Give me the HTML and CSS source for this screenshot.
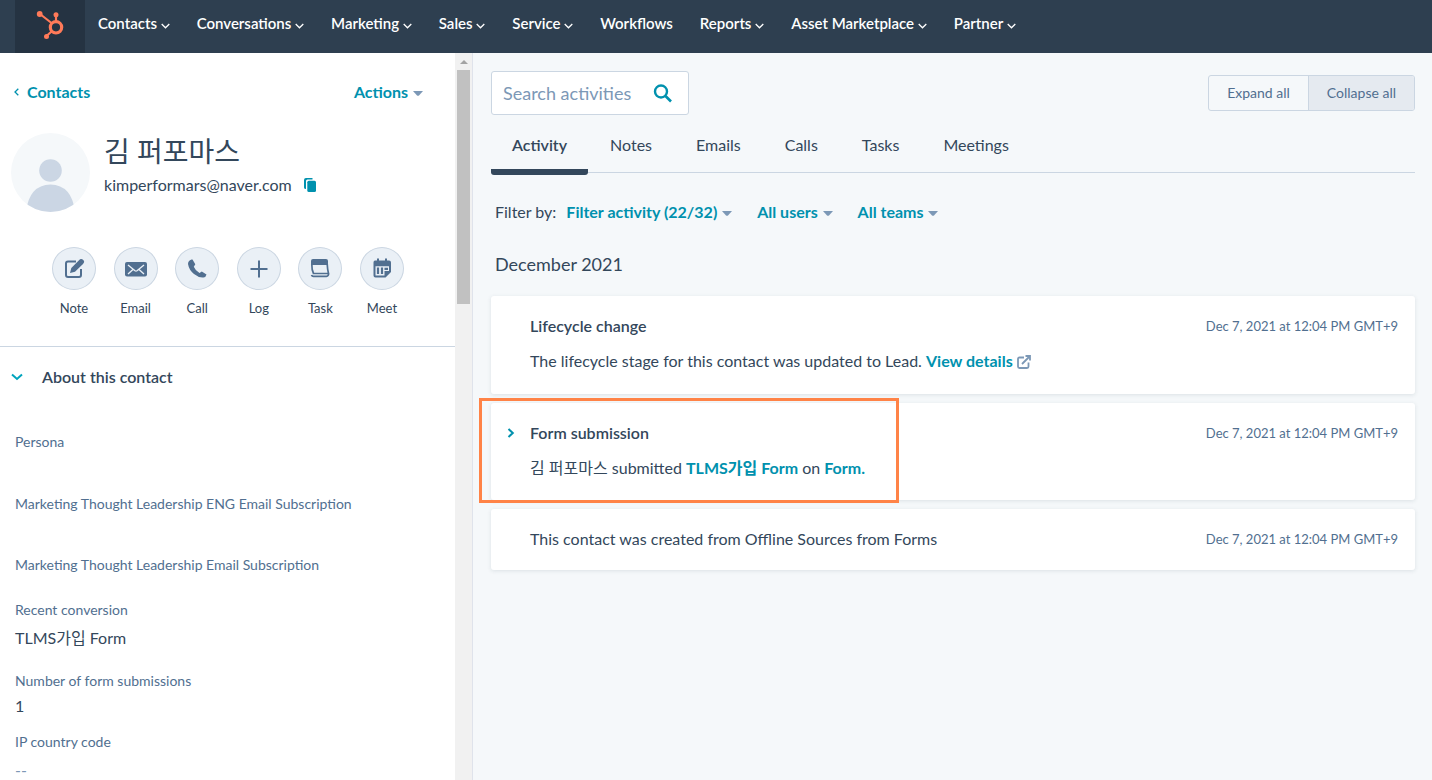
FILE: index.html
```html
<!DOCTYPE html>
<html lang="en">
<head>
<meta charset="utf-8">
<title>Contact record</title>
<link rel="stylesheet" href="styles.css">
</head>
<body>
<svg class="defs" aria-hidden="true">
  <symbol id="chev" viewBox="0 0 9 6"><path d="M.7 1 4.500 4.800 8.300 1" fill="none" stroke="currentColor" stroke-width="1.300"/></symbol>
  <symbol id="caret" viewBox="0 0 10 5"><path d="M0 0H10L6 4.4Q5 5.2 4 4.4Z" fill="currentColor"/></symbol>
</svg>
<header class="topbar">
  <a class="logo" href="#" aria-label="Home">
    <svg width="28" height="30" viewBox="0 0 28 30" fill="none" stroke="#ff7a59">
      <circle cx="20" cy="17.300" r="5.700" stroke-width="3.200"/>
      <path d="M4 4 15.500 13M20 4.500V11M10.500 26 15.500 21.500" stroke-width="2.200"/>
      <g fill="#ff7a59" stroke="none"><circle cx="3.700" cy="4" r="2.900"/><circle cx="20" cy="4.800" r="2.500"/><circle cx="10.500" cy="26.500" r="2.500"/></g>
    </svg>
  </a>
  <nav class="nav">
    <button>Contacts <svg><use href="#chev"/></svg></button>
    <button>Conversations <svg><use href="#chev"/></svg></button>
    <button>Marketing <svg><use href="#chev"/></svg></button>
    <button>Sales <svg><use href="#chev"/></svg></button>
    <button>Service <svg><use href="#chev"/></svg></button>
    <a href="#">Workflows</a>
    <button>Reports <svg><use href="#chev"/></svg></button>
    <button>Asset Marketplace <svg><use href="#chev"/></svg></button>
    <button>Partner <svg><use href="#chev"/></svg></button>
  </nav>
</header>
<div class="page">
  <aside class="sidebar">
    <div class="side-content">
      <div class="side-head">
        <a class="back" href="#"><svg width="5" height="8" viewBox="0 0 5 8"><path d="M4.300.7 1 4 4.300 7.300" fill="none" stroke="currentColor" stroke-width="1.300"/></svg>Contacts</a>
        <button class="drop">Actions <svg><use href="#caret"/></svg></button>
      </div>
      <section class="profile">
        <svg class="avatar" viewBox="0 0 79 79" aria-hidden="true">
          <defs><clipPath id="round"><circle cx="39.500" cy="39.500" r="39.500"/></clipPath></defs>
          <g clip-path="url(#round)"><rect width="79" height="79" fill="#f5f8fa"/><g fill="#cbd6e4"><circle cx="39.500" cy="37.500" r="11.300"/><path d="M15 79Q18 52 39.500 51.500 61 52 64 79Z"/></g></g>
        </svg>
        <div class="who">
          <h1>김 퍼포마스</h1>
          <p class="mail">kimperformars@naver.com
            <button class="copy" aria-label="Copy email"><svg width="12" height="14" viewBox="0 0 12 14"><path d="M2 0H8.500V1.500H3.500Q2 1.500 2 3V11Q0 11 0 9.500V2Q0 0 2 0Z" fill="#0091ae"/><rect x="3.300" y="2.700" width="8.700" height="11.300" rx="1.500" fill="#0091ae"/></svg></button>
          </p>
        </div>
      </section>
      <div class="actions">
        <button><span class="disc"><svg viewBox="0 0 22 22"><path d="M13 3.500H5Q3 3.500 3 5.500V17Q3 19 5 19H16Q18 19 18 17V11" fill="none" stroke="#516f90" stroke-width="2"/><path d="M7 15 8.300 10 16 2.300Q18-.2 20.500 2.300 22 4 20 6L12 13.700Z" fill="#516f90"/></svg></span>Note</button>
        <button><span class="disc"><svg viewBox="0 0 22 22"><rect y="4" width="22" height="14.500" rx="2" fill="#516f90"/><path d="M3 7 10 12.800Q11 13.500 12 12.800L19 7M3 16 8 11.500M19 16 14 11.500" fill="none" stroke="#eaf0f6" stroke-width="1.400"/></svg></span>Email</button>
        <button><span class="disc"><svg viewBox="0 0 22 22"><path d="M5.500 1.500Q2 2.500 2 6 3 12 8 16 13 20 17.500 19.500 20 19 20.500 16.500L15.800 13.500 13.500 15Q9.500 13 7.800 8.800L9.300 6.200 6.500 1.500Z" fill="#516f90"/></svg></span>Call</button>
        <button><span class="disc"><svg viewBox="0 0 22 22"><path d="M11 2.500V19.500M2.500 11H19.500" stroke="#516f90" stroke-width="2"/></svg></span>Log</button>
        <button><span class="disc"><svg viewBox="0 0 22 22"><path d="M4 1H17Q19 1 19 3V7H2V3Q2 1 4 1Z" fill="#516f90"/><path d="M2.800 6Q2.700 12 4.500 15.500H19.500Q18.500 12 18.200 6M2.500 17Q3 18.300 4.500 18.300H17.500Q19.600 18.300 19.500 15.500" fill="none" stroke="#516f90" stroke-width="1.700"/></svg></span>Task</button>
        <button><span class="disc"><svg viewBox="0 0 22 22"><path d="M4 2.500H6V.5H8V2.500H14V.5H16V2.500H18Q20 2.500 20 4.500V14L14.500 19.500H4.500Q2.500 19.500 2.500 17.500V4.500Q2.500 2.500 4 2.500Z" fill="#516f90"/><path d="M4.500 8.300H18V13H13.500V17.500H4.500Z" fill="#eaf0f6"/><path d="M7 9.500V16M11 9.500V16M13.500 10.800H17" stroke="#516f90" stroke-width="2.200"/></svg></span>Meet</button>
      </div>
      <section class="about">
        <h2><svg width="12" height="8" viewBox="0 0 12 8"><path d="M1 1.500 6 6 11 1.500" fill="none" stroke="#00a4bd" stroke-width="2"/></svg>About this contact</h2>
        <dl>
          <div class="blank"><dt>Persona</dt></div>
          <div><dt>Marketing Thought Leadership ENG Email Subscription</dt></div>
          <div class="short"><dt>Marketing Thought Leadership Email Subscription</dt></div>
          <div class="wide"><dt>Recent conversion</dt><dd>TLMS<span class="ko">가입</span> Form</dd></div>
          <div><dt>Number of form submissions</dt><dd>1</dd></div>
          <div class="unset"><dt>IP country code</dt><dd>--</dd></div>
        </dl>
      </section>
    </div>
    <div class="track" aria-hidden="true"><i class="arrow"></i><i class="thumb"></i></div>
  </aside>
  <main>
    <div class="tools">
      <label class="search"><input type="text" aria-label="Search activities" placeholder="Search activities">
        <svg width="20" height="20" viewBox="0 0 20 20" fill="none" stroke="#0091ae"><circle cx="8" cy="8.500" r="6" stroke-width="2.400"/><path d="M12.500 13 18 18.500" stroke-width="2.600"/></svg></label>
      <div class="toggle"><button>Expand all</button><button class="on">Collapse all</button></div>
    </div>
    <nav class="tabs"><a class="current" href="#">Activity</a><a href="#">Notes</a><a href="#">Emails</a><a href="#">Calls</a><a href="#">Tasks</a><a href="#">Meetings</a></nav>
    <div class="filters"><span>Filter by:</span>
      <button class="drop">Filter activity (22/32) <svg><use href="#caret"/></svg></button>
      <button class="drop">All users <svg><use href="#caret"/></svg></button>
      <button class="drop">All teams <svg><use href="#caret"/></svg></button>
    </div>
    <h2 class="month">December 2021</h2>
    <div class="feed">
      <article class="card">
        <div class="row"><h3>Lifecycle change</h3><time>Dec 7, 2021 at 12:04 PM GMT+9</time></div>
        <p>The lifecycle stage for this contact was updated to Lead. <a href="#">View details <svg class="ext" viewBox="0 0 14 14"><path d="M7 2.500H2.500Q1 2.500 1 4V11.500Q1 13 2.500 13H10Q11.500 13 11.500 11.500V7.500M5 9 12 2M8.500 1H13V5.500" fill="none" stroke="#7c98b6" stroke-width="1.800"/></svg></a></p>
      </article>
      <article class="card marked">
        <div class="row"><button class="open" aria-label="Expand"><svg width="8" height="10" viewBox="0 0 8 10"><path d="M1.500 1 5.800 5 1.500 9" fill="none" stroke="#0091ae" stroke-width="2"/></svg></button><h3>Form submission</h3><time>Dec 7, 2021 at 12:04 PM GMT+9</time></div>
        <p><span class="ko">김 퍼포마스</span> submitted <a href="#">TLMS<span class="ko">가입</span> Form</a> on <a href="#">Form.</a></p>
      </article>
      <article class="card compact">
        <div class="row"><p>This contact was created from Offline Sources from Forms</p><time>Dec 7, 2021 at 12:04 PM GMT+9</time></div>
      </article>
    </div>
  </main>
</div>
</body>
</html>
```

FILE: styles.css
```css
*, *::after { box-sizing: border-box; margin: 0; padding: 0; }
body {
  display: flex; flex-direction: column; height: 100vh; overflow: hidden;
  font: 16px/20px Lato, "Noto Sans CJK KR", sans-serif; color: #33475b; background: #f5f8fa;
}
button { font: inherit; color: inherit; background: none; border: 0; cursor: pointer; }
a { color: #0091ae; font-weight: 700; text-decoration: none; }
.defs { position: absolute; width: 0; height: 0; }

.topbar { display: flex; flex: none; height: 53px; padding-left: 15px; background: #2e3f50; }
.logo { display: flex; width: 70px; padding: 10px 0 0 21px; background: #253342; }
.nav { display: flex; gap: 27px; padding: 13px 0 0 13px; align-items: flex-start; color: #fff; white-space: nowrap; }
.nav button, .nav a { font-size: 15px; font-weight: 600; color: #fff; }
.nav svg { width: 9px; height: 6px; }

.page { display: flex; flex: 1; min-height: 0; }
.sidebar { display: flex; flex: none; width: 473px; background: #fff; border-right: 1px solid #dfe3eb; }
.side-content { flex: 1; overflow: hidden; }
.track { display: flex; flex-direction: column; align-items: center; width: 17px; background: #f1f1f1; }
.arrow { border: 4px solid transparent; border-top: 0; border-bottom-color: #a3a3a3; margin: 7px 0 6px; }
.thumb { width: 13px; height: 234px; background: #c1c1c1; }

.side-head { display: flex; justify-content: space-between; padding: 29px 32px 0 14px; }
.back { display: flex; align-items: center; gap: 8px; }
.drop { color: #0091ae; font-weight: 700; white-space: nowrap; }
.drop svg { width: 10px; height: 5px; margin: 0 0 2px 1px; color: #7c98b6; }
.profile { display: flex; gap: 14px; padding: 31px 0 0 11px; }
.avatar { width: 79px; height: 79px; }
h1 { font-size: 28px; line-height: 36px; font-weight: 400; }
.mail { display: flex; align-items: center; gap: 12px; margin-top: 6px; }
.copy { display: flex; }
.actions { display: flex; justify-content: space-between; padding: 35px 51px 28px 52px; border-bottom: 1px solid #cbd6e2; }
.actions button { display: flex; flex-direction: column; align-items: center; gap: 8px; width: 44px; font-size: 13px; }
.disc { display: grid; place-items: center; width: 44px; height: 43px; border: 1px solid #cbd6e2; border-radius: 50%; background: #eaf0f6; }
.disc svg { width: 22px; height: 22px; }
.about { padding: 20px 15px 0 11px; }
.about h2 { display: flex; align-items: center; gap: 19px; font-size: 16px; font-weight: 600; }
dl { margin: 45px 0 0 4px; }
dl div { height: 61px; }
dl .blank { height: 62px; }
dl .short { height: 45px; }
dl .wide { height: 71px; }
dt { font-size: 14px; color: #516f90; }
dd { margin-top: 5px; }
.wide dd { margin-top: 8px; }
.unset dd { margin-top: 8px; color: #7c98b6; }
.ko { font-size: 16px; line-height: 1; }

main { flex: 1; min-width: 0; padding: 18px 17px 0 18px; }
.tools { display: flex; justify-content: space-between; }
.search { display: flex; align-items: center; width: 198px; height: 44px; padding: 0 15px 0 11px; border: 1px solid #cbd6e2; border-radius: 3px; background: #fff; }
.search input { flex: 1; min-width: 0; border: 0; outline: 0; background: none; font: 18px/24px Lato, sans-serif; color: #33475b; }
.search input::placeholder { color: #7c98b6; }
.toggle { display: flex; height: 36px; margin-top: 4px; border: 1px solid #cbd6e2; border-radius: 3px; overflow: hidden; }
.toggle button { padding: 0 18px; font-size: 14px; color: #516f90; }
.toggle .on { background: #e5eaf0; border-left: 1px solid #cbd6e2; }
.tabs { display: flex; height: 58px; border-bottom: 1px solid #cbd6e2; }
.tabs a { height: 60px; padding: 20px 22px 0; color: #33475b; font-weight: 400; }
.tabs .current { padding: 20px 21px 0; font-weight: 600; border-bottom: 6px solid #33475b; border-radius: 3px; }
.filters { display: flex; gap: 25px; padding: 29px 4px 0; }
.filters span { margin-right: -15px; }
.month { padding: 30px 4px 0; font-size: 18px; line-height: 24px; font-weight: 400; }
.feed { display: flex; flex-direction: column; gap: 9px; margin-top: 20px; }
.card { position: relative; padding: 20px 17px 23px 39px; border-radius: 3px; background: #fff; box-shadow: 0 1px 4px rgba(45, 62, 80, .12); }
.card > p { margin-top: 15px; }
.marked { padding-bottom: 22px; }
.compact { padding-bottom: 21px; }
.row { display: flex; justify-content: space-between; }
.card h3 { font-size: 16px; font-weight: 600; }
time { font-size: 13px; color: #516f90; }
.ext { width: 14px; height: 14px; vertical-align: -2px; }
.open { position: absolute; left: 16px; top: 25px; display: flex; }
.marked::after { content: ""; position: absolute; left: -12px; top: -5px; width: 420px; height: 105px; border: 3px solid #ff8347; pointer-events: none; }
```
